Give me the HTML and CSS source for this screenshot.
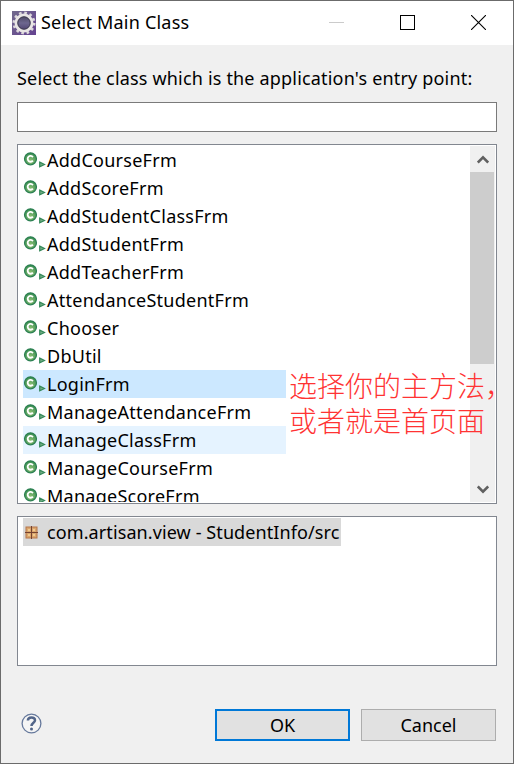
FILE: index.html
```
<!DOCTYPE html>
<html lang="en">
<head>
    <meta charset="UTF-8">
    <meta name="viewport" content="width=device-width, initial-scale=1.0">
    <title>Select Main Class</title>
    <link rel="stylesheet" href="styles.css">
</head>
<body>

    <!-- Shared icons -->
    <svg class="sprite" width="0" height="0">
        <defs>
            <radialGradient id="green" cx="50%" cy="65%" r="60%">
                <stop offset="0" stop-color="#8fc173"/>
                <stop offset="1" stop-color="#3b8f55"/>
            </radialGradient>
        </defs>
        <symbol id="class-icon" viewBox="0 0 24 24">
            <circle cx="7.5" cy="12.8" r="6" fill="url(#green)" stroke="#2c8052" stroke-width="1.2"/>
            <path d="M9.9 11.1A2.9 2.9 0 1 0 9.9 14.6" fill="none" stroke="#fff" stroke-width="1.8"/>
            <path d="M16.7 16.1L21.5 18.5L16.7 20.9Z" fill="#73ae83" stroke="#35885a" stroke-width="1.2"/>
        </symbol>
    </svg>

    <div class="dialog">
        <div class="title-bar">
            <svg class="app-icon" width="24" height="24" viewBox="0 0 24 24">
                <defs>
                    <linearGradient id="purple" x1="0" y1="0" x2="1" y2="1">
                        <stop offset="0" stop-color="#716a8c"/>
                        <stop offset="1" stop-color="#654291"/>
                    </linearGradient>
                    <linearGradient id="core" x1="0" y1="0" x2="0" y2="1">
                        <stop offset="0" stop-color="#45405a"/>
                        <stop offset=".5" stop-color="#6d678f"/>
                        <stop offset="1" stop-color="#4a3c6c"/>
                    </linearGradient>
                </defs>
                <rect width="24" height="24" fill="url(#purple)"/>
                <circle cx="12" cy="12" r="10.2" fill="none" stroke="#dcd9dc" stroke-width="2.6" stroke-dasharray="2.6 2.74"/>
                <circle cx="12" cy="12" r="8" fill="url(#core)" stroke="#e9e6e5" stroke-width="3"/>
                <circle cx="12" cy="12" r="6.2" fill="none" stroke="#3e3b4e" stroke-width="1"/>
            </svg>
            <h1>Select Main Class</h1>
            <div class="controls">
                <svg width="15" height="15" viewBox="0 0 15 15"><path d="M0 7.5H15" stroke="#cbcbcb"/></svg>
                <svg width="15" height="15" viewBox="0 0 15 15"><rect x=".5" y=".5" width="14" height="14" fill="none" stroke="#000"/></svg>
                <svg width="15" height="15" viewBox="0 0 15 15"><path d="M0 0L15 15M15 0L0 15" stroke="#000" stroke-width="1.1"/></svg>
            </div>
        </div>

        <div class="content">
            <label class="prompt" for="filter">Select the class which is the application's entry point:</label>
            <input type="text" id="filter" class="filter">

            <div class="class-list">
                <ul>
                    <li><svg><use href="#class-icon"/></svg><span>AddCourseFrm</span></li>
                    <li><svg><use href="#class-icon"/></svg><span>AddScoreFrm</span></li>
                    <li><svg><use href="#class-icon"/></svg><span>AddStudentClassFrm</span></li>
                    <li><svg><use href="#class-icon"/></svg><span>AddStudentFrm</span></li>
                    <li><svg><use href="#class-icon"/></svg><span>AddTeacherFrm</span></li>
                    <li><svg><use href="#class-icon"/></svg><span>AttendanceStudentFrm</span></li>
                    <li><svg><use href="#class-icon"/></svg><span>Chooser</span></li>
                    <li><svg><use href="#class-icon"/></svg><span>DbUtil</span></li>
                    <li class="selected"><svg><use href="#class-icon"/></svg><span>LoginFrm</span></li>
                    <li><svg><use href="#class-icon"/></svg><span>ManageAttendanceFrm</span></li>
                    <li class="hovered"><svg><use href="#class-icon"/></svg><span>ManageClassFrm</span></li>
                    <li><svg><use href="#class-icon"/></svg><span>ManageCourseFrm</span></li>
                    <li><svg><use href="#class-icon"/></svg><span>ManageScoreFrm</span></li>
                </ul>
                <div class="scrollbar">
                    <div class="arrow"><svg width="12" height="9" viewBox="0 0 12 9"><path d="M.8 7.5L6 2.3L11.2 7.5" fill="none" stroke="#606060" stroke-width="2.6"/></svg></div>
                    <div class="thumb"></div>
                    <div class="arrow down"><svg width="12" height="9" viewBox="0 0 12 9"><path d="M.8 1.5L6 6.7L11.2 1.5" fill="none" stroke="#606060" stroke-width="2.6"/></svg></div>
                </div>
                <p class="note" lang="zh-CN">选择你的主方法，<br>或者就是首页面</p>
            </div>

            <div class="package-list">
                <div class="package">
                    <svg width="24" height="28" viewBox="0 0 24 28">
                        <rect x="3" y="9" width="11" height="11" fill="#dba66d" stroke="#b5774c"/>
                        <path d="M5 11H7V13H5ZM10 11H12V13H10ZM5 16H7V18H5ZM10 16H12V18H10Z" fill="#f1cb91"/>
                        <path d="M8.5 8V21M2 14.5H15" stroke="#744331"/>
                    </svg>
                    <span>com.artisan.view - StudentInfo/src</span>
                </div>
            </div>

            <div class="footer">
                <svg class="help" width="21" height="21" viewBox="0 0 21 21">
                    <circle cx="10.5" cy="10.5" r="9.4" fill="#f5f5f5" stroke="#66799c" stroke-width="1.3"/>
                    <path d="M6.9 7.6C6.9 3.5 14 3.5 14 7.2C14 9.8 10.5 9.6 10.5 13" fill="none" stroke="#526589" stroke-width="2.5"/>
                    <circle cx="10.5" cy="16" r="1.5" fill="#526589"/>
                </svg>
                <button class="ok">OK</button>
                <button>Cancel</button>
            </div>
        </div>
    </div>

</body>
</html>
```
FILE: styles.css
```
* {
    box-sizing: border-box;
    margin: 0;
    padding: 0;
}

body {
    font-family: 'Noto Sans', 'Noto Sans CJK SC', sans-serif;
    font-size: 18px;
    color: #000;
    overflow: hidden;
}

.sprite {
    display: block;
}

.dialog {
    width: 514px;
    height: 764px;
    background-color: #f0f0f0;
    border: 1px solid #6b6b6b;
}

.title-bar {
    display: flex;
    align-items: center;
    height: 44px;
    padding: 0 27px 0 11px;
    background-color: #fff;
}

.title-bar h1 {
    margin-left: 5px;
    padding-bottom: 2px;
    font-size: 18px;
    font-weight: 400;
    letter-spacing: 0.2px;
}

.controls {
    display: flex;
    gap: 56px;
    margin-left: auto;
    padding-bottom: 1px;
}

.content {
    padding: 19px 16px 0;
}

.prompt {
    display: block;
    height: 38px;
    line-height: 28px;
    letter-spacing: 0.18px;
    white-space: nowrap;
}

.filter {
    display: block;
    width: 480px;
    height: 30px;
    border: 1px solid #7a7a7a;
    outline: none;
}

.class-list {
    position: relative;
    display: flex;
    justify-content: space-between;
    width: 480px;
    height: 360px;
    margin-top: 12px;
    padding: 1px 1px 1px 5px;
    background-color: #fff;
    border: 1px solid #828790;
}

.class-list ul {
    width: 263px;
    overflow: hidden;
    list-style: none;
}

.class-list li {
    display: flex;
    height: 28px;
    line-height: 28px;
    letter-spacing: 0.26px;
}

.class-list li svg {
    width: 24px;
    height: 24px;
}

.selected {
    background-color: #cce8ff;
}

.hovered {
    background-color: #e5f3ff;
}

.scrollbar {
    display: flex;
    flex-direction: column;
    width: 25px;
    background-color: #f0f0f0;
}

.arrow {
    display: flex;
    justify-content: center;
    align-items: center;
    height: 26px;
}

.arrow.down {
    margin-top: auto;
}

.thumb {
    width: 24px;
    height: 192px;
    background-color: #cdcdcd;
}

/* Red remark written over the list */
.note {
    position: absolute;
    top: 223px;
    left: 271px;
    font-family: 'Noto Sans CJK SC', sans-serif;
    font-size: 28px;
    font-weight: 300;
    line-height: 35px;
    color: #ff3333;
    white-space: nowrap;
}

.package-list {
    width: 480px;
    height: 150px;
    margin-top: 12px;
    padding: 1px 5px;
    background-color: #fff;
    border: 1px solid #828790;
}

.package {
    display: flex;
    width: 318px;
    height: 28px;
    line-height: 28px;
    letter-spacing: 0.1px;
    background-color: #d9d9d9;
    white-space: nowrap;
}

.footer {
    display: flex;
    align-items: center;
    gap: 11px;
    height: 32px;
    margin-top: 43px;
    padding: 0 1px 0 4px;
}

.help {
    margin-top: -3px;
}

button {
    width: 135px;
    height: 32px;
    font-family: inherit;
    font-size: 18px;
    line-height: 28px;
    color: #000;
    background-color: #e1e1e1;
    border: 1px solid #adadad;
}

.ok {
    margin-left: auto;
    border: 2px solid #0078d7;
}
```
